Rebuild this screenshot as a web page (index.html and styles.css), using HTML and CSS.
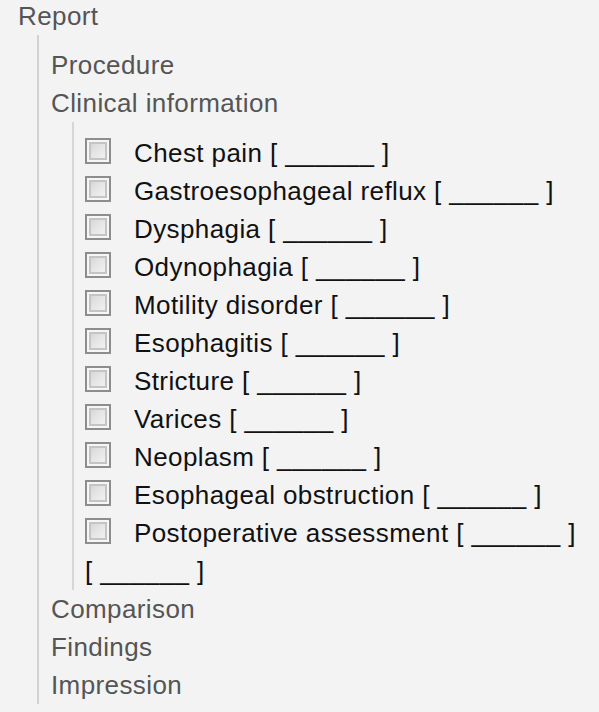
FILE: index.html
```html
<!DOCTYPE html>
<html>
<head>
<meta charset="utf-8">
<link rel="stylesheet" href="styles.css">
</head>
<body>
<div class="tree">
  <div class="root">Report</div>
  <ul class="level1">
    <li class="head">Procedure</li>
    <li class="head">Clinical information
      <ul class="level2">
        <li class="item"><span class="box"></span><span class="label">Chest pain [ ______ ]</span></li>
        <li class="item"><span class="box"></span><span class="label">Gastroesophageal reflux [ ______ ]</span></li>
        <li class="item"><span class="box"></span><span class="label">Dysphagia [ ______ ]</span></li>
        <li class="item"><span class="box"></span><span class="label">Odynophagia [ ______ ]</span></li>
        <li class="item"><span class="box"></span><span class="label">Motility disorder [ ______ ]</span></li>
        <li class="item"><span class="box"></span><span class="label">Esophagitis [ ______ ]</span></li>
        <li class="item"><span class="box"></span><span class="label">Stricture [ ______ ]</span></li>
        <li class="item"><span class="box"></span><span class="label">Varices [ ______ ]</span></li>
        <li class="item"><span class="box"></span><span class="label">Neoplasm [ ______ ]</span></li>
        <li class="item"><span class="box"></span><span class="label">Esophageal obstruction [ ______ ]</span></li>
        <li class="item"><span class="box"></span><span class="label">Postoperative assessment [ ______ ]</span></li>
        <li class="blank">[ ______ ]</li>
      </ul>
    </li>
    <li class="head">Comparison</li>
    <li class="head">Findings</li>
    <li class="head">Impression</li>
  </ul>
</div>
</body>
</html>
```
FILE: styles.css
```css
html, body {
  margin: 0;
  padding: 0;
  background: #f3f3f3;
}
body {
  font-family: "Liberation Sans", Arial, sans-serif;
  font-size: 26px;
  letter-spacing: 0.4px;
  color: #555555;
}
.tree {
  padding-left: 18px;
}
.root {
  line-height: 32px;
  color: #555555;
}
ul {
  list-style: none;
  margin: 0;
  padding: 0;
}
.level1 {
  margin: 3px 0 0 19px;
  padding: 11px 0 0 12px;
  border-left: 2px solid #d2d2d2;
}
.head {
  line-height: 38px;
  color: #555555;
}
.level2 {
  margin: 0 0 0 21px;
  padding: 12px 0 0 11px;
  border-left: 2px solid #d6d6d6;
}
.item {
  display: flex;
  align-items: center;
  line-height: 38px;
  color: #111111;
}
.box {
  box-sizing: border-box;
  flex: none;
  width: 26px;
  height: 26px;
  margin: 0 23px 4px 0;
  border: 2px solid #8d8d8d;
  background: linear-gradient(135deg, #cfcfcf 0%, #e6e6e6 50%, #f7f7f7 100%);
  box-shadow: inset 0 0 0 2px #f6f6f6, inset 0 0 0 4px #c4c4c4;
}
.label {
  white-space: pre;
}
.blank {
  line-height: 38px;
  color: #111111;
  white-space: pre;
}
```
